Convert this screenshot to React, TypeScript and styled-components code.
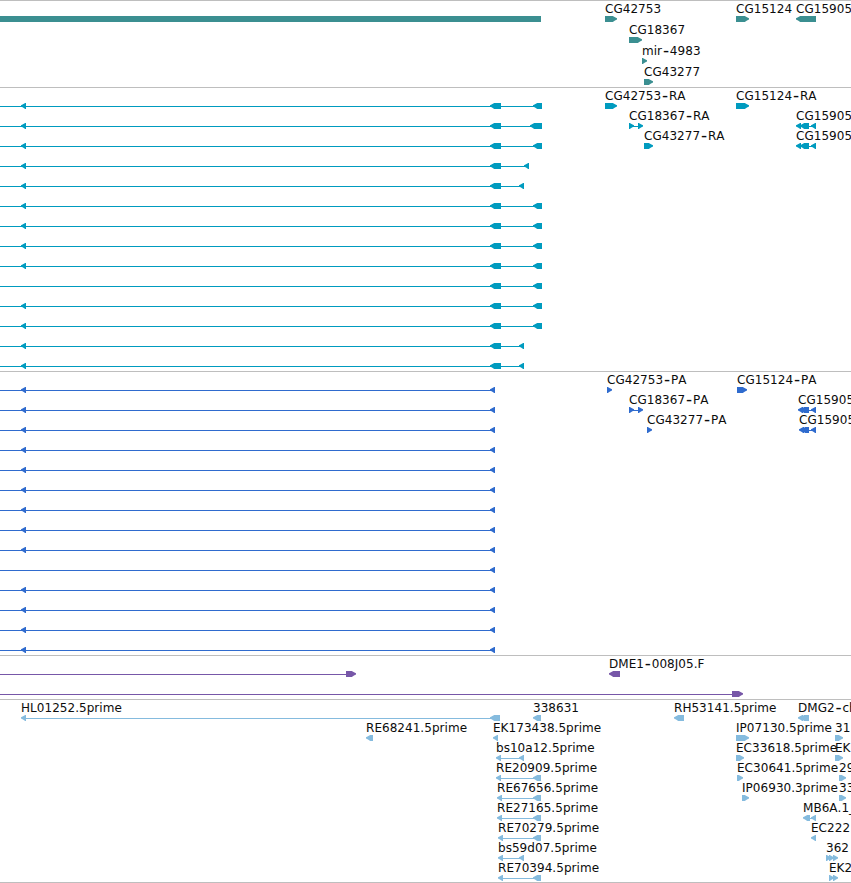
import React from "react";
import styled, { createGlobalStyle } from "styled-components";

const GlobalStyle = createGlobalStyle`
  body { margin: 0; background: #fff; overflow: hidden; }
`;

type Dir = "l" | "r" | "bar";
/** A solid block: start, end, and the side its arrow head points to. */
type Block = [number, number, Dir];
interface Feature {
  label?: string;
  x?: number;
  blocks: Block[];
  line?: [number, number];
}
interface TrackData {
  name: string;
  color: string;
  height: number;
  rowHeight: number;
  rows: Feature[][];
}

const Browser = styled.main`
  display: flex;
  flex-direction: column;
  width: 851px;
  height: 883px;
  overflow: hidden;
  border-top: 1px solid #bebebe;
  box-sizing: border-box;
`;

const Track = styled.section<{ $height: number }>`
  display: flex;
  flex-direction: column;
  flex: none;
  height: ${(p) => p.$height}px;
  border-bottom: 1px solid #bebebe;
`;

const Lane = styled.svg<{ $height: number; $color: string }>`
  display: block;
  flex: none;
  width: 851px;
  height: ${(p) => p.$height}px;
  overflow: visible;
  fill: ${(p) => p.$color};
`;

const Label = styled.text`
  font-family: "DejaVu Sans", sans-serif;
  font-size: 12px;
  font-kerning: none;
  letter-spacing: 0.04px;
  fill: #0c0c0c;
  white-space: pre;
`;

const Dash = styled.tspan`
  font-size: 17px;
`;

const shape = ([a, b, dir]: Block) => {
  if (dir === "bar") return `M${a} 15H${b}V21H${a}Z`;
  const head = Math.min(5, b - a);
  const s = dir === "l" ? 1 : -1;
  const tip = dir === "l" ? a : b;
  const back = dir === "l" ? b : a;
  return (
    `M${tip} 17.3L${tip + s * 2} 16.2L${tip + s * (head - 0.8)} 15H${back}V21` +
    `H${tip + s * (head - 0.8)}L${tip + s * 2} 19.4L${tip} 18.4Z`
  );
};

const LabelText = ({ text, x }: { text: string; x: number }) => {
  const [head, tail] = text.split("-");
  return (
    <Label x={x} y={12}>
      {head}
      {tail !== undefined && (
        <>
          <Dash dx={0.8} dy={1.2}>-</Dash>
          <tspan dx={0.8} dy={-1.2}>{tail}</tspan>
        </>
      )}
    </Label>
  );
};

const gene = (label: string, x: number, ...blocks: Block[]): Feature => ({
  label,
  x,
  blocks,
  line: blocks.length > 1 ? [blocks[0][0] + 3, blocks[blocks.length - 1][1] - 3] : undefined,
});

const EXON: Block = [21, 26, "l"];
const END: Block = [533, 542, "l"];
const SHORT: Block = [519, 524, "l"];

const transcript = (last: Block, exon = true): Feature => ({
  blocks: [...(exon ? [EXON] : []), [490, 501, "l"], last],
  line: [0, last[1] - 2],
});

const protein = (exon = true): Feature => ({
  blocks: [...(exon ? [EXON] : []), [490, 495, "l"]],
  line: [0, 493],
});

const tracks: TrackData[] = [
  {
    name: "genes",
    color: "#3b8f91",
    height: 86,
    rowHeight: 21,
    rows: [
      [
        { blocks: [[0, 541, "bar"]] },
        gene("CG42753", 605, [605, 617, "r"]),
        gene("CG15124", 736, [736, 749, "r"]),
        gene("CG15905", 796, [796, 816, "l"]),
      ],
      [gene("CG18367", 629, [629, 642, "r"])],
      [gene("mir-4983", 642, [642, 647, "r"])],
      [gene("CG43277", 644, [644, 653, "r"])],
    ],
  },
  {
    name: "transcripts",
    color: "#009bbf",
    height: 283,
    rowHeight: 20,
    rows: [
      [transcript(END), gene("CG42753-RA", 605, [605, 617, "r"]), gene("CG15124-RA", 736, [736, 749, "r"])],
      [
        transcript([530, 542, "l"]),
        gene("CG18367-RA", 629, [629, 634, "r"], [638, 643, "r"]),
        gene("CG15905", 796, [796, 801, "l"], [800, 809, "l"], [811, 816, "l"]),
      ],
      [
        transcript(END),
        gene("CG43277-RA", 644, [644, 653, "r"]),
        gene("CG15905", 796, [796, 801, "l"], [800, 809, "l"], [811, 816, "l"]),
      ],
      [transcript([524, 529, "l"])],
      [transcript(SHORT)],
      [transcript(END)],
      [transcript(END)],
      [transcript(END)],
      [transcript(END)],
      [transcript(END, false)],
      [transcript(END)],
      [transcript(END)],
      [transcript(SHORT)],
      [transcript(SHORT)],
    ],
  },
  {
    name: "proteins",
    color: "#2f6bce",
    height: 283,
    rowHeight: 20,
    rows: [
      [protein(), gene("CG42753-PA", 607, [607, 612, "r"]), gene("CG15124-PA", 737, [737, 747, "r"])],
      [
        protein(),
        gene("CG18367-PA", 629, [629, 634, "r"], [638, 643, "r"]),
        gene("CG15905", 798, [798, 803, "l"], [800, 809, "l"], [811, 816, "l"]),
      ],
      [
        protein(),
        gene("CG43277-PA", 647, [647, 652, "r"]),
        gene("CG15905", 799, [799, 804, "l"], [801, 809, "l"], [811, 816, "l"]),
      ],
      ...Array.from({ length: 11 }, (_, i) => [protein(i !== 6)]),
    ],
  },
  {
    name: "clones",
    color: "#7757a8",
    height: 43,
    rowHeight: 20,
    rows: [
      [{ blocks: [[346, 356, "r"]], line: [0, 346] }, gene("DME1-008J05.F", 609, [609, 620, "l"])],
      [{ blocks: [[732, 743, "r"]], line: [0, 732] }],
    ],
  },
  {
    name: "ests",
    color: "#85bbde",
    height: 182,
    rowHeight: 20,
    rows: [
      [
        gene("HL01252.5prime", 21, [21, 26, "l"], [490, 500, "l"]),
        gene("338631", 533, [533, 541, "l"]),
        gene("RH53141.5prime", 674, [674, 684, "l"]),
        gene("DMG2-ch", 798, [798, 803, "l"], [800, 809, "l"]),
      ],
      [
        gene("RE68241.5prime", 366, [366, 373, "l"]),
        gene("EK173438.5prime", 493, [493, 498, "l"]),
        gene("IP07130.5prime", 736, [736, 749, "r"]),
        gene("31", 835, [835, 843, "r"]),
      ],
      [
        gene("bs10a12.5prime", 496, [496, 501, "l"], [519, 524, "l"]),
        gene("EC33618.5prime", 736, [736, 744, "r"]),
        gene("EK", 835, [835, 843, "r"]),
      ],
      [
        gene("RE20909.5prime", 496, [496, 501, "l"], [533, 541, "l"]),
        gene("EC30641.5prime", 737, [737, 743, "r"]),
        gene("29", 839, [839, 846, "r"]),
      ],
      [
        gene("RE67656.5prime", 497, [497, 502, "l"], [533, 541, "l"]),
        gene("IP06930.3prime", 742, [742, 749, "r"]),
        gene("33", 839, [839, 846, "r"]),
      ],
      [
        gene("RE27165.5prime", 497, [497, 502, "l"], [533, 541, "l"]),
        gene("MB6A.1_", 803, [803, 810, "l"], [811, 816, "l"]),
      ],
      [
        gene("RE70279.5prime", 498, [498, 503, "l"], [533, 541, "l"]),
        gene("EC222", 811, [811, 816, "l"]),
      ],
      [
        gene("bs59d07.5prime", 498, [498, 503, "l"], [519, 524, "l"]),
        gene("362", 826, [826, 831, "r"], [829, 834, "r"], [833, 838, "r"]),
      ],
      [
        gene("RE70394.5prime", 498, [498, 503, "l"], [533, 541, "l"]),
        gene("EK2", 829, [829, 834, "r"], [833, 838, "r"]),
      ],
    ],
  },
];

const FeatureGlyph = ({ label, x = 0, blocks, line }: Feature) => (
  <g>
    {line && <rect x={line[0]} y={18} width={line[1] - line[0]} height={1} />}
    {blocks.map((b, i) => (
      <path key={i} d={shape(b)} />
    ))}
    {label && <LabelText text={label} x={x} />}
  </g>
);

export default function App() {
  return (
    <>
      <GlobalStyle />
      <Browser>
        {tracks.map((track) => (
          <Track key={track.name} $height={track.height}>
            {track.rows.map((row, i) => (
              <Lane key={i} $height={track.rowHeight} $color={track.color}>
                {row.map((f, j) => (
                  <FeatureGlyph key={j} {...f} />
                ))}
              </Lane>
            ))}
          </Track>
        ))}
      </Browser>
    </>
  );
}
